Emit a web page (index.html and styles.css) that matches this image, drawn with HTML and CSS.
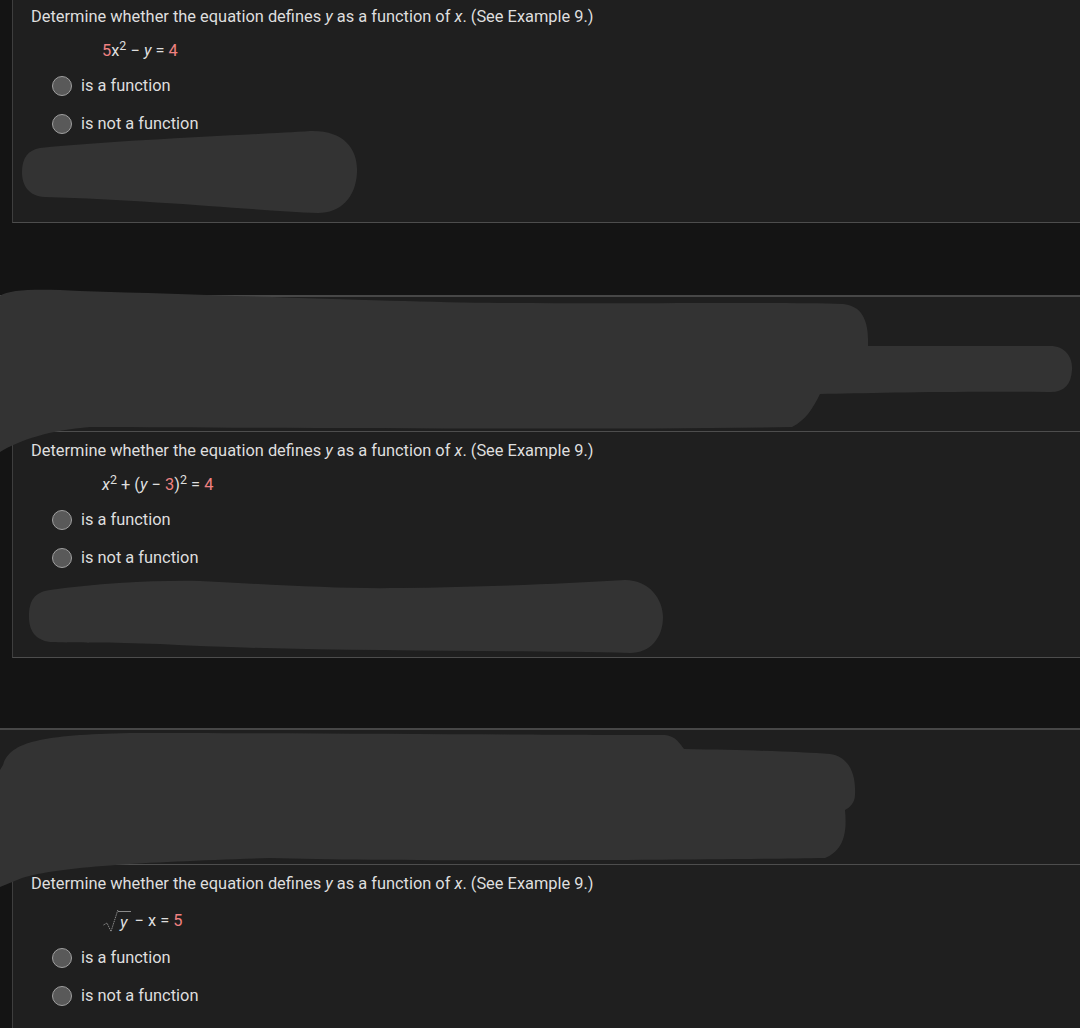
FILE: index.html
```html
<!DOCTYPE html>
<html>
<head>
<meta charset="utf-8">
<link rel="stylesheet" href="styles.css">
</head>
<body>
<div class="page">
  <section class="q q-first">
    <p class="prompt">Determine whether the equation defines <i>y</i> as a function of <i>x</i>. (See Example 9.)</p>
    <div class="eq"><span class="num">5</span>x<sup>2</sup> − <i>y</i> = <span class="num">4</span></div>
    <div class="options">
      <label class="opt"><span class="radio"></span>is a function</label>
      <label class="opt"><span class="radio"></span>is not a function</label>
    </div>
  </section>
  <div class="gap"></div>
  <div class="band"></div>
  <section class="q">
    <p class="prompt">Determine whether the equation defines <i>y</i> as a function of <i>x</i>. (See Example 9.)</p>
    <div class="eq"><i>x</i><sup>2</sup> + (<i>y</i> − <span class="num">3</span>)<sup>2</sup> = <span class="num">4</span></div>
    <div class="options">
      <label class="opt"><span class="radio"></span>is a function</label>
      <label class="opt"><span class="radio"></span>is not a function</label>
    </div>
  </section>
  <div class="gap gap-2"></div>
  <div class="band"></div>
  <section class="q q-last">
    <p class="prompt">Determine whether the equation defines <i>y</i> as a function of <i>x</i>. (See Example 9.)</p>
    <div class="eq eq-sqrt"><span class="sqrt"><svg class="radical" width="17" height="25" viewBox="0 0 17 25"><path d="M1.5 17 L5 15 L9 23.5 L16 1.5" fill="none" stroke="#8a8a8a" stroke-width="1" stroke-dasharray="1.5 0.8"/></svg><span class="rad-body"><i>y</i></span></span> − x = <span class="num">5</span></div>
    <div class="options">
      <label class="opt"><span class="radio"></span>is a function</label>
      <label class="opt"><span class="radio"></span>is not a function</label>
    </div>
  </section>
  <svg class="scribbles" width="1080" height="1028" viewBox="0 0 1080 1028">
    <path d="M40 148 C120 140 250 135 310 131 C345 130 358 150 357 172 C356 198 340 213 318 213 C250 210 150 200 45 197 C28 196 22 185 22 172 C22 158 28 150 40 148 Z"/>
    <path d="M0 296 C10 289 40 289 80 291 C250 296 400 302 500 303 C650 304 780 302 843 304 C862 306 869 320 868 346 L1050 346 C1066 346 1073 358 1072 370 C1071 385 1064 393 1048 392 C950 391 870 393 820 394 C813 408 806 420 792 427 C600 430 300 428 90 427 C50 430 20 440 0 452 Z"/>
    <path d="M50 590 C100 583 160 580 200 581 C280 585 340 589 400 588 C480 587 560 584 625 580 C650 580 663 600 663 617 C663 638 650 653 630 653 C500 650 300 652 160 644 C110 642 70 643 50 642 C35 640 29 630 29 617 C29 600 35 592 50 590 Z"/>
    <path d="M3 765 C10 742 40 735 130 733 C300 733 550 735 665 735 C676 736 680 744 684 749 C750 750 800 752 830 754 C850 757 856 775 855 795 C855 803 849 808 845 810 C847 830 845 850 825 858 C700 860 400 862 270 858 C150 862 60 866 22 878 L0 887 L0 770 Z"/>
  </svg>
</div>
</body>
</html>
```
FILE: styles.css
```css
html, body {
  margin: 0;
  padding: 0;
  background: #141414;
}
.page {
  position: relative;
  width: 1080px;
  height: 1028px;
  overflow: hidden;
  font-family: Roboto, "Liberation Sans", sans-serif;
  color: #dedede;
}
.q {
  margin-left: 12px;
  border-left: 1px solid #3e3e3e;
  border-bottom: 1px solid #4d4d4d;
  background: #1f1f1f;
  box-sizing: border-box;
  height: 226px;
  padding: 9px 0 0 18px;
}
.q-first {
  margin-top: -2px;
  height: 225px;
  padding-top: 9px;
}
.q-last {
  height: 170px;
  border-bottom: none;
}
.prompt {
  margin: 0;
  font-size: 16.4px;
  line-height: 20px;
}
.eq {
  margin: 14px 0 0 71px;
  font-size: 16.4px;
  line-height: 20px;
  height: 20px;
}
.eq sup {
  font-size: 12.5px;
  line-height: 0;
  vertical-align: 6px;
}
.num {
  color: #ef8181;
}
.eq-sqrt {
  margin-top: 14px;
  height: 24px;
  line-height: 24px;
}
.sqrt {
  display: inline-flex;
  align-items: flex-end;
  vertical-align: bottom;
  margin-left: 0;
}
.radical {
  display: block;
}
.rad-body {
  border-top: 1px solid #8a8a8a;
  padding: 0 3px 0 2px;
  line-height: 21px;
  margin-left: -1px;
}
.options {
  display: flex;
  flex-direction: column;
  gap: 18px;
  margin: 15px 0 0 21px;
}
.eq-sqrt + .options {
  margin-top: 16px;
}
.opt {
  display: flex;
  align-items: center;
  gap: 9px;
  font-size: 16.4px;
  line-height: 20px;
  height: 20px;
}
.radio {
  width: 20px;
  height: 20px;
  box-sizing: border-box;
  border-radius: 50%;
  border: 1.5px solid #a0a0a0;
  background: #595959;
}
.gap {
  height: 72px;
}
.gap-2 {
  height: 70px;
}
.band {
  height: 134px;
  border-top: 2px solid #474747;
  border-bottom: 1px solid #4d4d4d;
  background: #1f1f1f;
}
.scribbles {
  position: absolute;
  left: 0;
  top: 0;
  pointer-events: none;
}
.scribbles path {
  fill: #333333;
}
```
